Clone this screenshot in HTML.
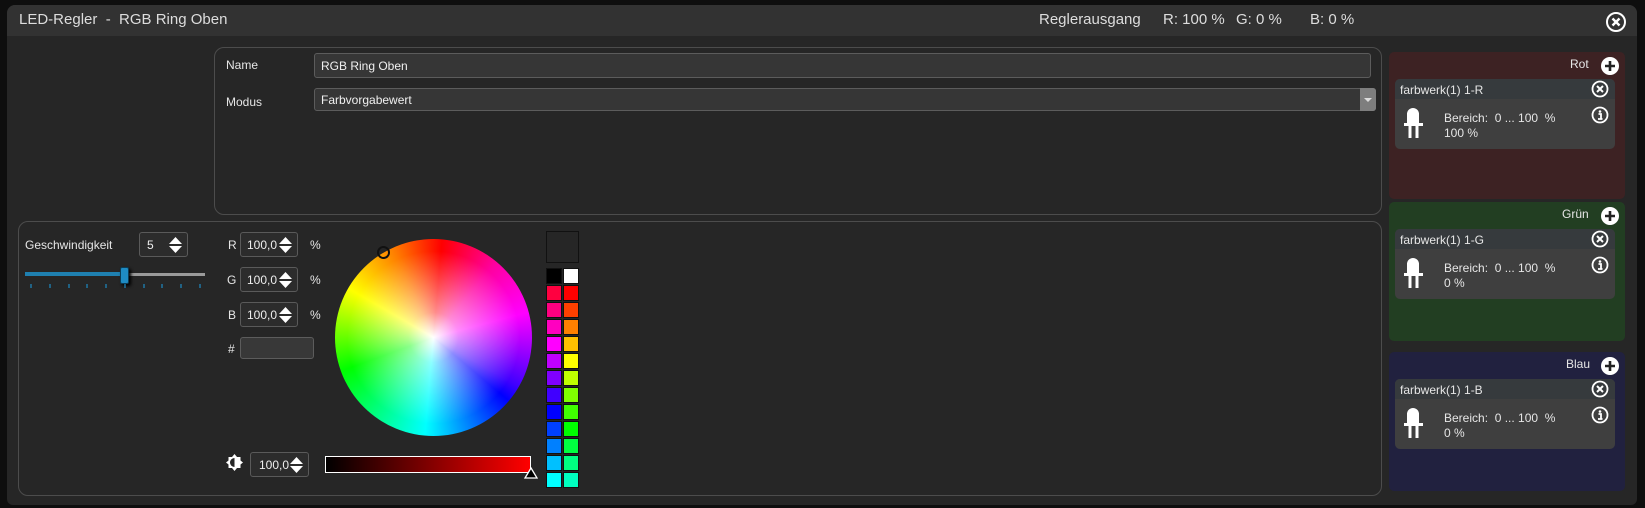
<!DOCTYPE html>
<html><head><meta charset="utf-8"><style>
*{margin:0;padding:0;box-sizing:border-box}
body{width:1645px;height:508px;background:#0e0e0e;position:relative;overflow:hidden;font-family:"Liberation Sans",sans-serif;color:#e6e6e6}
.a{position:absolute}
.t{font-size:12px;white-space:nowrap}
.box{position:absolute;background:#363636;border:1px solid #5c5c5c;border-radius:3px}
.spin{position:absolute;background:#2c2c2c;border:1px solid #5a5a5a;border-radius:3px;font-size:12px;color:#eee}
.arr{position:absolute;right:4px;top:3px;width:15px;height:18px}
.sw{position:absolute;width:16px;height:16px;border:1px solid #111}
.card{position:absolute;left:1395px;width:220px;height:70px;background:#3f3f3f;border-radius:5px;overflow:hidden}
.card .h{height:20px;background:#363a3d;font-size:12px;padding:4px 0 0 5px}
</style></head><body>
<div class="a" style="left:7px;top:5px;width:1630px;height:500px;background:#262626;border-radius:8px 8px 6px 6px"></div>
<div class="a" style="left:7px;top:5px;width:1630px;height:31px;background:#323232;border-radius:8px 8px 0 0"></div>
<div class="a" style="left:19px;top:11px;font-size:15px;color:#ddd;white-space:pre">LED-Regler  -  RGB Ring Oben</div>
<div class="a" style="left:1039px;top:11px;font-size:15px;color:#ddd">Reglerausgang</div>
<div class="a" style="left:1163px;top:11px;font-size:15px;color:#ddd">R: 100 %</div>
<div class="a" style="left:1236px;top:11px;font-size:15px;color:#ddd">G: 0 %</div>
<div class="a" style="left:1310px;top:11px;font-size:15px;color:#ddd">B: 0 %</div>
<svg class="a" style="left:1605px;top:11px" width="22" height="22" viewBox="0 0 22 22"><circle cx="11" cy="11" r="9" fill="none" stroke="#fff" stroke-width="2"/><path d="M7.5 7.5L14.5 14.5M14.5 7.5L7.5 14.5" stroke="#fff" stroke-width="2.4"/></svg>

<div class="a" style="left:214px;top:47px;width:1168px;height:168px;border:1px solid #4c4c4c;border-radius:10px"></div>
<div class="a t" style="left:226px;top:58px">Name</div>
<div class="box" style="left:314px;top:53px;width:1057px;height:25px"></div>
<div class="a t" style="left:321px;top:59px;color:#f0f0f0">RGB Ring Oben</div>
<div class="a t" style="left:226px;top:95px">Modus</div>
<div class="box" style="left:314px;top:88px;width:1062px;height:23px"></div>
<div class="a" style="left:1360px;top:88px;width:16px;height:23px;background:#7e7e7e;border-radius:0 3px 3px 0"></div>
<div class="a" style="left:1364px;top:98px;width:0;height:0;border-left:4px solid transparent;border-right:4px solid transparent;border-top:4px solid #ddd"></div>
<div class="a t" style="left:321px;top:93px;color:#f0f0f0">Farbvorgabewert</div>

<div class="a" style="left:18px;top:221px;width:1364px;height:275px;border:1px solid #4c4c4c;border-radius:10px"></div>
<div class="a t" style="left:25px;top:238px">Geschwindigkeit</div>
<div class="spin" style="left:139px;top:232px;width:49px;height:25px"><span class="a" style="left:7px;top:5px">5</span>
<svg class="arr" viewBox="0 0 15 18"><path d="M1 8L7.5 1L14 8Z M1 10L7.5 17L14 10Z" fill="#fff"/></svg></div>
<div class="a" style="left:25px;top:272px;width:99px;height:4px;background:#1f80b0"></div>
<div class="a" style="left:124px;top:273px;width:81px;height:3px;background:#9a9a9a"></div>
<div class="a" style="left:120px;top:267px;width:9px;height:17px;background:#1e8bc3;border:1px solid #0c3c55;border-radius:2px;box-shadow:2px 2px 3px #000"></div>
<svg class="a" style="left:25px;top:283px" width="185" height="6"><g stroke="#1e8bc3" stroke-width="1.2">
<line x1="6" y1="1" x2="6" y2="5"/><line x1="25" y1="1" x2="25" y2="5"/><line x1="44" y1="1" x2="44" y2="5"/><line x1="62" y1="1" x2="62" y2="5"/><line x1="81" y1="1" x2="81" y2="5"/><line x1="100" y1="1" x2="100" y2="5"/><line x1="119" y1="1" x2="119" y2="5"/><line x1="137" y1="1" x2="137" y2="5"/><line x1="156" y1="1" x2="156" y2="5"/><line x1="175" y1="1" x2="175" y2="5"/></g></svg>

<div class="a t" style="left:228px;top:238px">R</div>
<div class="spin" style="left:240px;top:232px;width:58px;height:25px"><span class="a" style="left:6px;top:5px">100,0</span><svg class="arr" viewBox="0 0 15 18"><path d="M1 8L7.5 1L14 8Z M1 10L7.5 17L14 10Z" fill="#fff"/></svg></div>
<div class="a t" style="left:310px;top:238px">%</div>
<div class="a t" style="left:227px;top:273px">G</div>
<div class="spin" style="left:240px;top:267px;width:58px;height:25px"><span class="a" style="left:6px;top:5px">100,0</span><svg class="arr" viewBox="0 0 15 18"><path d="M1 8L7.5 1L14 8Z M1 10L7.5 17L14 10Z" fill="#fff"/></svg></div>
<div class="a t" style="left:310px;top:273px">%</div>
<div class="a t" style="left:228px;top:308px">B</div>
<div class="spin" style="left:240px;top:302px;width:58px;height:25px"><span class="a" style="left:6px;top:5px">100,0</span><svg class="arr" viewBox="0 0 15 18"><path d="M1 8L7.5 1L14 8Z M1 10L7.5 17L14 10Z" fill="#fff"/></svg></div>
<div class="a t" style="left:310px;top:308px">%</div>
<div class="a t" style="left:228px;top:342px">#</div>
<div class="box" style="left:240px;top:337px;width:74px;height:22px;background:#383838"></div>

<div class="a" style="left:335px;top:239px;width:197px;height:197px;border-radius:50%;background:conic-gradient(from 5deg,#ff0000,#ff00a0 35deg,#ff00ff 70deg,#4000ff 115deg,#0000ff 125deg,#00ffff 180deg,#00ff00 245deg,#ffff00 295deg,#ff8000 330deg,#ff0000 360deg)"></div>
<div class="a" style="left:335px;top:239px;width:197px;height:197px;border-radius:50%;background:radial-gradient(circle,rgba(255,255,255,1) 0%,rgba(255,255,255,.55) 18%,rgba(255,255,255,0) 62%)"></div>
<div class="a" style="left:377px;top:246px;width:13px;height:13px;border:2px solid #111;border-radius:50%"></div>

<svg class="a" style="left:225px;top:453px" width="19" height="19" viewBox="0 0 19 19"><path d="M9.5 1L12 4H15.5V7.5L18 9.5L15.5 11.5V15H12L9.5 18L7 15H3.5V11.5L1 9.5L3.5 7.5V4H7Z" fill="#fff"/><path d="M9.5 5A4.5 4.5 0 0 0 9.5 14Z" fill="#262626"/></svg>
<div class="spin" style="left:250px;top:452px;width:59px;height:25px"><span class="a" style="left:8px;top:5px">100,0</span><svg class="arr" viewBox="0 0 15 18"><path d="M1 8L7.5 1L14 8Z M1 10L7.5 17L14 10Z" fill="#fff"/></svg></div>
<div class="a" style="left:325px;top:456px;width:206px;height:17px;border:1px solid #fff;background:linear-gradient(90deg,#000,#f00)"></div>
<svg class="a" style="left:524px;top:467px" width="14" height="12"><path d="M7 1L13 11H1Z" fill="#000" stroke="#fff" stroke-width="1.3"/></svg>

<div class="a" style="left:546px;top:231px;width:33px;height:32px;border:1px solid #111;background:#262626"></div>

<div class="a" style="left:1389px;top:52px;width:236px;height:147px;background:#3d2223;border-radius:5px"></div>
<div class="a" style="left:1389px;top:202px;width:236px;height:139px;background:#223e22;border-radius:5px"></div>
<div class="a" style="left:1389px;top:352px;width:236px;height:139px;background:#21213f;border-radius:5px"></div>

<div class="a t" style="left:1570px;top:57px">Rot</div>
<div class="a t" style="left:1562px;top:207px">Grün</div>
<div class="a t" style="left:1566px;top:357px">Blau</div>

<div class="card" style="top:79px"><div class="h">farbwerk(1) 1-R</div></div>
<div class="card" style="top:229px"><div class="h">farbwerk(1) 1-G</div></div>
<div class="card" style="top:379px"><div class="h">farbwerk(1) 1-B</div></div>
<div class="a t" style="left:1444px;top:111px">Bereich:&nbsp; 0 ... 100 &nbsp;%</div><div class="a t" style="left:1444px;top:126px">100 %</div>
<div class="a t" style="left:1444px;top:261px">Bereich:&nbsp; 0 ... 100 &nbsp;%</div><div class="a t" style="left:1444px;top:276px">0 %</div>
<div class="a t" style="left:1444px;top:411px">Bereich:&nbsp; 0 ... 100 &nbsp;%</div><div class="a t" style="left:1444px;top:426px">0 %</div>

<svg class="a" style="left:0;top:0" width="1645" height="508">
<defs>
<g id="plus"><circle r="9" fill="#fff"/><path d="M-5 0H5M0 -5V5" stroke="#222" stroke-width="2.6"/></g>
<g id="x"><circle r="7.5" fill="none" stroke="#fff" stroke-width="1.8"/><path d="M-3 -3L3 3M3 -3L-3 3" stroke="#fff" stroke-width="2"/></g>
<g id="i"><circle r="7.5" fill="none" stroke="#fff" stroke-width="1.8"/><circle cx="0" cy="-3.5" r="1.3" fill="#fff"/><path d="M-1.5 -1H1V4M-2 4H2.5" stroke="#fff" stroke-width="1.8" fill="none"/></g>
<g id="led"><path d="M3 17V7A6 6 0 0 1 15 7V17Z M0 16H19V19H0Z M4.5 19H7.5V31H4.5Z M11.5 19H14.5V31H11.5Z" fill="#fff"/></g>
</defs>
<use href="#plus" x="1610" y="66"/><use href="#plus" x="1610" y="216"/><use href="#plus" x="1610" y="366"/>
<use href="#x" x="1600" y="89"/><use href="#x" x="1600" y="239"/><use href="#x" x="1600" y="389"/>
<use href="#i" x="1600" y="115"/><use href="#i" x="1600" y="265"/><use href="#i" x="1600" y="415"/>
<use href="#led" x="1404" y="107"/><use href="#led" x="1404" y="257"/><use href="#led" x="1404" y="407"/>
</svg>

<div class="sw" style="left:546px;top:268px;background:#000"></div><div class="sw" style="left:563px;top:268px;background:#fff"></div>
<div class="sw" style="left:546px;top:285px;background:#ff0040"></div><div class="sw" style="left:563px;top:285px;background:#ff0000"></div>
<div class="sw" style="left:546px;top:302px;background:#ff0080"></div><div class="sw" style="left:563px;top:302px;background:#ff4000"></div>
<div class="sw" style="left:546px;top:319px;background:#ff00c0"></div><div class="sw" style="left:563px;top:319px;background:#ff8000"></div>
<div class="sw" style="left:546px;top:336px;background:#ff00ff"></div><div class="sw" style="left:563px;top:336px;background:#ffc000"></div>
<div class="sw" style="left:546px;top:353px;background:#c000ff"></div><div class="sw" style="left:563px;top:353px;background:#ffff00"></div>
<div class="sw" style="left:546px;top:370px;background:#8000ff"></div><div class="sw" style="left:563px;top:370px;background:#c0ff00"></div>
<div class="sw" style="left:546px;top:387px;background:#4000ff"></div><div class="sw" style="left:563px;top:387px;background:#80ff00"></div>
<div class="sw" style="left:546px;top:404px;background:#0000ff"></div><div class="sw" style="left:563px;top:404px;background:#40ff00"></div>
<div class="sw" style="left:546px;top:421px;background:#0040ff"></div><div class="sw" style="left:563px;top:421px;background:#00ff00"></div>
<div class="sw" style="left:546px;top:438px;background:#0080ff"></div><div class="sw" style="left:563px;top:438px;background:#00ff40"></div>
<div class="sw" style="left:546px;top:455px;background:#00c0ff"></div><div class="sw" style="left:563px;top:455px;background:#00ff80"></div>
<div class="sw" style="left:546px;top:472px;background:#00ffff"></div><div class="sw" style="left:563px;top:472px;background:#00ffc0"></div>
</body></html>
